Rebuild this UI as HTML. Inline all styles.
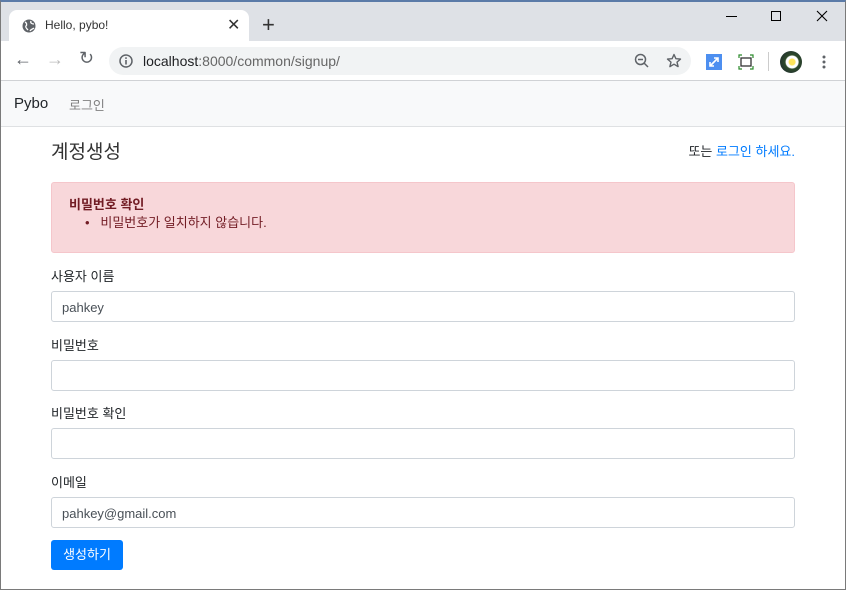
<!DOCTYPE html>
<html><head><meta charset="utf-8"><style>
*{box-sizing:border-box;margin:0;padding:0}
body{width:846px;height:590px;overflow:hidden;font-family:"Liberation Sans","Noto Sans CJK KR",sans-serif;background:#fff;position:relative;color:#212529}
.frame{position:absolute;inset:0;border:1px solid #7a7a7a;border-top:2px solid #5b7ba8;pointer-events:none;z-index:10}
.strip{position:absolute;left:0;top:0;width:846px;height:41px;background:#dee1e6}
.tab{position:absolute;left:9px;top:10px;width:240px;height:31px;background:#fff;border-radius:8px 8px 0 0}
.abs{position:absolute}
.toolbar{position:absolute;top:41px;left:0;width:846px;height:40px;background:#fff;border-bottom:1px solid #d0d2d5}
.omni{position:absolute;left:109px;top:6px;width:582px;height:28px;background:#f1f3f4;border-radius:14px}
.nav{position:absolute;top:81px;left:0;width:846px;height:46px;background:#f8f9fa;border-bottom:1px solid #dfe1e3}
.lbl{position:absolute;left:51px;font-size:13px;color:#212529}
.inp{position:absolute;left:51px;width:744px;height:31px;border:1px solid #ced4da;border-radius:3px;font-size:13px;padding:8px 10px;color:#495057}
</style></head><body>
<div class="strip"></div>
<div class="tab">
 <svg class="abs" style="left:13px;top:9px" width="14" height="14" viewBox="0 0 14 14"><circle cx="7" cy="7" r="6.5" fill="#5f6368"/><path d="M3 3c2 1 2 3 1 4s1 3 2 4M9 2c-1 2 1 3 3 3M8 12c1-2 3-2 4-3" stroke="#fff" stroke-width="1.3" fill="none"/></svg>
 <span class="abs" style="left:36px;top:8px;font-size:12px;color:#333">Hello, pybo!</span>
 <span class="abs" style="left:218px;top:5px;font-size:16px;color:#333">✕</span>
</div>
<span class="abs" style="left:262px;top:14px;font-size:22px;line-height:22px;color:#333">+</span>
<div class="abs" style="left:726px;top:16px;width:11px;height:1px;background:#000"></div>
<div class="abs" style="left:771px;top:11px;width:10px;height:10px;border:1px solid #000"></div>
<svg class="abs" style="left:816px;top:10px" width="12" height="12"><path d="M1 1L11 11M11 1L1 11" stroke="#000" stroke-width="1.1"/></svg>
<div class="toolbar">
 <span class="abs" style="left:14px;top:8px;font-size:18px;color:#5f6368">←</span>
 <span class="abs" style="left:46px;top:8px;font-size:18px;color:#bbb">→</span>
 <span class="abs" style="left:79px;top:7px;font-size:18px;color:#5f6368">↻</span>
 <div class="omni">
  <svg class="abs" style="left:10px;top:7px" width="14" height="14"><circle cx="7" cy="7" r="6" fill="none" stroke="#5f6368" stroke-width="1.5"/><rect x="6.2" y="6" width="1.6" height="4.5" fill="#5f6368"/><rect x="6.2" y="3.3" width="1.6" height="1.6" fill="#5f6368"/></svg>
  <span class="abs" style="left:34px;top:6px;font-size:14px;color:#202124">localhost<span style="color:#666">:8000/common/signup/</span></span>
  <svg class="abs" style="left:525px;top:6px" width="16" height="16"><circle cx="6.5" cy="6.5" r="5" fill="none" stroke="#5f6368" stroke-width="1.5"/><path d="M4 6.5h5M10 10l4 4" stroke="#5f6368" stroke-width="1.5"/></svg>
  <svg class="abs" style="left:557px;top:6px" width="16" height="16" viewBox="0 0 16 16"><path d="M8 1.5l1.9 4.2 4.6.4-3.5 3 1.1 4.5L8 11.2l-4.1 2.4 1.1-4.5-3.5-3 4.6-.4z" fill="none" stroke="#5f6368" stroke-width="1.4" stroke-linejoin="round"/></svg>
 </div>
 <div class="abs" style="left:706px;top:13px;width:16px;height:16px;background:#4d8ff0"><svg width="16" height="16"><path d="M4 12L12 4M8 4h4v4M4 8v4h4" stroke="#fff" stroke-width="1.6" fill="none"/></svg></div>
 <svg class="abs" style="left:738px;top:13px" width="16" height="16"><path d="M1 4V1h3M12 1h3v3M15 12v3h-3M4 15H1v-3" stroke="#2a8a2a" stroke-width="1.2" fill="none"/><rect x="3" y="4" width="10" height="8" fill="none" stroke="#333" stroke-width="1.3"/></svg>
 <div class="abs" style="left:768px;top:11px;width:1px;height:19px;background:#ccc"></div>
 <div class="abs" style="left:780px;top:10px;width:22px;height:22px;border-radius:50%;background:radial-gradient(circle at 55% 50%,#ffe45c 0 3px,#fff 4px 6px,#2e4a2a 7px,#1a2233)"></div>
 <svg class="abs" style="left:821px;top:14px" width="6" height="16"><circle cx="3" cy="2" r="1.5" fill="#5f6368"/><circle cx="3" cy="7" r="1.5" fill="#5f6368"/><circle cx="3" cy="12" r="1.5" fill="#5f6368"/></svg>
</div>
<div class="nav">
 <span class="abs" style="left:14px;top:14px;font-size:15px;color:#212529">Pybo</span>
 <span class="abs" style="left:69px;top:14px;font-size:13px;color:#808080">로그인</span>
</div>
<div class="abs" style="left:51px;top:137px;font-size:19px;color:#333">계정생성</div>
<div class="abs" style="right:51px;top:141px;font-size:13px;color:#212529">또는 <span style="color:#007bff">로그인 하세요.</span></div>
<div class="abs" style="left:51px;top:182px;width:744px;height:71px;background:#f8d7da;border:1px solid #f5c6cb;border-radius:3px;color:#721c24;font-size:13px">
 <div class="abs" style="left:17px;top:11px;font-weight:bold">비밀번호 확인</div>
 <div class="abs" style="left:33px;top:29px">•&nbsp;&nbsp;&nbsp;비밀번호가 일치하지 않습니다.</div>
</div>
<div class="lbl" style="top:266px">사용자 이름</div>
<div class="inp" style="top:291px">pahkey</div>
<div class="lbl" style="top:335px">비밀번호</div>
<div class="inp" style="top:360px"></div>
<div class="lbl" style="top:403px">비밀번호 확인</div>
<div class="inp" style="top:428px"></div>
<div class="lbl" style="top:472px">이메일</div>
<div class="inp" style="top:497px">pahkey@gmail.com</div>
<div class="abs" style="left:51px;top:540px;width:72px;height:30px;background:#007bff;border-radius:3px;color:#fff;font-size:13px;text-align:center;line-height:29px">생성하기</div>
<div class="frame"></div>
</body></html>
